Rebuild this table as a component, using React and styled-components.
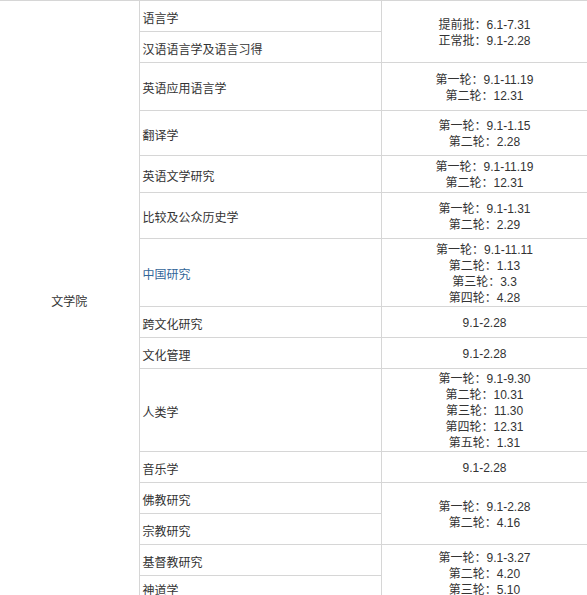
import React from "react";
import styled, { createGlobalStyle } from "styled-components";

const Global = createGlobalStyle`
  html, body {
    margin: 0;
    padding: 0;
    overflow: hidden;
    background: #ffffff;
  }
  body {
    font-family: "Liberation Sans", "Noto Sans CJK SC", sans-serif;
    font-size: 12px;
    color: #333333;
  }
`;

const Table = styled.table`
  border-collapse: collapse;
  table-layout: fixed;
  width: 588px;
  font-size: 12px;
  line-height: 16px;
  color: #333333;
`;

const Col = styled.col`
  width: ${(p) => p.$w}px;
`;

const Row = styled.tr`
  height: ${(p) => p.$h}px;
`;

const baseCell = `
  border: 1px solid #d6d6d6;
  vertical-align: middle;
  padding: 2px 3px 0 3px;
`;

const CollegeCell = styled.td`
  ${baseCell}
  border-left: none;
  text-align: center;
`;

const NameCell = styled.td`
  ${baseCell}
  padding-top: 5px;
  text-align: left;
  color: ${(p) => (p.$link ? "#336699" : "#333333")};
`;

const DateCell = styled.td`
  ${baseCell}
  text-align: center;
`;

const Line = styled.div`
  white-space: nowrap;
`;

const rows = [
  { name: "语言学", h: 31, dates: ["提前批：6.1-7.31", "正常批：9.1-2.28"], span: 2 },
  { name: "汉语语言学及语言习得", h: 31 },
  { name: "英语应用语言学", h: 48, dates: ["第一轮：9.1-11.19", "第二轮：12.31"] },
  { name: "翻译学", h: 45, dates: ["第一轮：9.1-1.15", "第二轮：2.28"] },
  { name: "英语文学研究", h: 37, dates: ["第一轮：9.1-11.19", "第二轮：12.31"] },
  { name: "比较及公众历史学", h: 46, dates: ["第一轮：9.1-1.31", "第二轮：2.29"] },
  {
    name: "中国研究",
    h: 68,
    link: true,
    dates: ["第一轮：9.1-11.11", "第二轮：1.13", "第三轮：3.3", "第四轮：4.28"],
  },
  { name: "跨文化研究", h: 31, dates: ["9.1-2.28"] },
  { name: "文化管理", h: 31, dates: ["9.1-2.28"] },
  {
    name: "人类学",
    h: 83,
    dates: ["第一轮：9.1-9.30", "第二轮：10.31", "第三轮：11.30", "第四轮：12.31", "第五轮：1.31"],
  },
  { name: "音乐学", h: 31, dates: ["9.1-2.28"] },
  { name: "佛教研究", h: 31, dates: ["第一轮：9.1-2.28", "第二轮：4.16"], span: 2 },
  { name: "宗教研究", h: 31 },
  { name: "基督教研究", h: 31, dates: ["第一轮：9.1-3.27", "第二轮：4.20", "第三轮：5.10"], span: 2 },
  { name: "神道学", h: 25 },
];

export default function App() {
  return (
    <>
      <Global />
      <Table>
        <colgroup>
          <Col $w={139} />
          <Col $w={242} />
          <Col $w={207} />
        </colgroup>
        <tbody>
          {rows.map((r, i) => (
            <Row key={r.name} $h={r.h}>
              {i === 0 && <CollegeCell rowSpan={rows.length}>文学院</CollegeCell>}
              <NameCell $link={r.link}>{r.name}</NameCell>
              {r.dates && (
                <DateCell rowSpan={r.span || 1}>
                  {r.dates.map((d) => (
                    <Line key={d}>{d}</Line>
                  ))}
                </DateCell>
              )}
            </Row>
          ))}
        </tbody>
      </Table>
    </>
  );
}
